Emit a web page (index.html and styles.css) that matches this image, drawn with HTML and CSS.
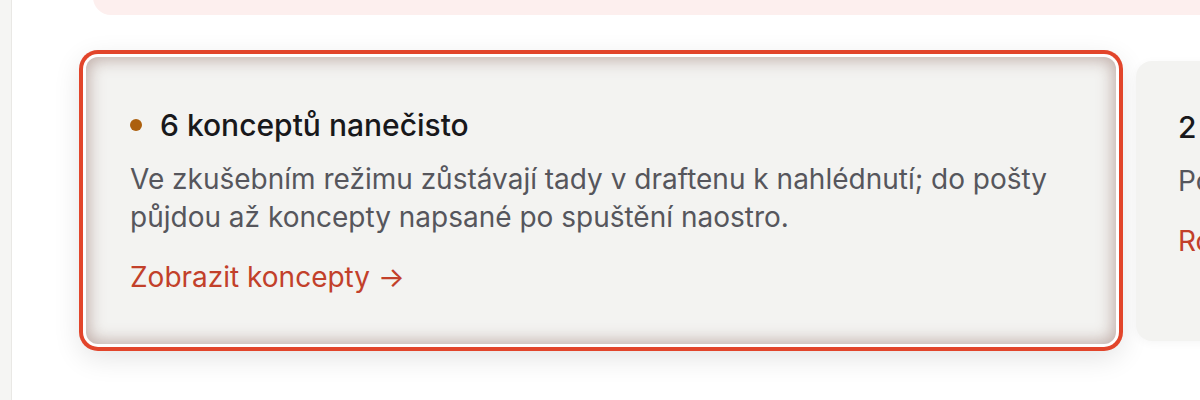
FILE: index.html
```html
<!DOCTYPE html>
<html lang="cs">
<head>
<meta charset="utf-8">
<title>Koncepty</title>
<link rel="stylesheet" href="styles.css">
</head>
<body>
<div class="layout">
  <aside class="sidebar"></aside>
  <main class="main">
    <div class="notice"></div>
    <div class="cards">
      <section class="card card-active">
        <h3 class="card-title"><span class="dot"></span>6 konceptů nanečisto</h3>
        <p class="card-text">Ve zkušebním režimu zůstávají tady v draftenu k nahlédnutí; do pošty půjdou až koncepty napsané po spuštění naostro.</p>
        <a class="card-link" href="#">Zobrazit koncepty →</a>
      </section>
      <section class="card card-next">
        <h3 class="card-title">2 koncepty čekají na odeslání</h3>
        <p class="card-text">Po spuštění naostro je můžete projít a odeslat.</p>
        <a class="card-link" href="#">Rozhodnout →</a>
      </section>
    </div>
  </main>
</div>
</body>
</html>
```

FILE: styles.css
```css
html, body {
  margin: 0;
  padding: 0;
  background: #ffffff;
  font-family: Inter, "Noto Sans", "Liberation Sans", sans-serif;
}

.layout {
  display: flex;
  width: 1200px;
  height: 400px;
  overflow: hidden;
}

.sidebar {
  flex: 0 0 11px;
  background: #f5f5f3;
  border-right: 1px solid #e9e8e5;
}

.main {
  flex: 1;
  min-width: 0;
  display: flex;
  flex-direction: column;
}

.notice {
  margin-left: 81px;
  margin-top: -40px;
  height: 55px;
  width: 1200px;
  flex: 0 0 auto;
  background: #fdefee;
  border-radius: 0 0 0 18px;
}

.cards {
  display: flex;
  align-items: center;
  gap: 20px;
  margin-left: 74px;
  margin-top: 42px;
  height: 287px;
}

.card {
  flex: 0 0 auto;
  box-sizing: border-box;
  background: #f3f3f1;
  border-radius: 14px;
}

.card-active {
  width: 1030px;
  height: 287px;
  padding: 50px 44px 0 44px;
  border-radius: 12px;
  box-shadow:
    inset 0 0 16px 3px rgba(125, 82, 72, 0.42),
    0 0 0 3px #ffffff,
    0 0 0 7px #e2452b,
    0 8px 28px 6px rgba(0, 0, 0, 0.11);
}

.card-next {
  width: 400px;
  height: 280px;
  padding: 48px 42px 0 42px;
  border-radius: 16px;
  box-shadow: 0 2px 10px rgba(0, 0, 0, 0.04);
}

.card-title {
  display: flex;
  align-items: center;
  gap: 18px;
  margin: 0;
  font-size: 30px;
  line-height: 36px;
  font-weight: 500;
  color: #18181b;
  white-space: nowrap;
}

.dot {
  width: 12px;
  height: 12px;
  border-radius: 50%;
  background: #ac5f0d;
  flex: 0 0 auto;
}

.card-text {
  margin: 17px 0 0 0;
  font-size: 28px;
  line-height: 38px;
  color: #56565c;
}

.card-next .card-text {
  white-space: nowrap;
}

.card-link {
  display: inline-block;
  margin-top: 22px;
  font-size: 28px;
  line-height: 38px;
  color: #c2402a;
  text-decoration: none;
  white-space: nowrap;
}
```
